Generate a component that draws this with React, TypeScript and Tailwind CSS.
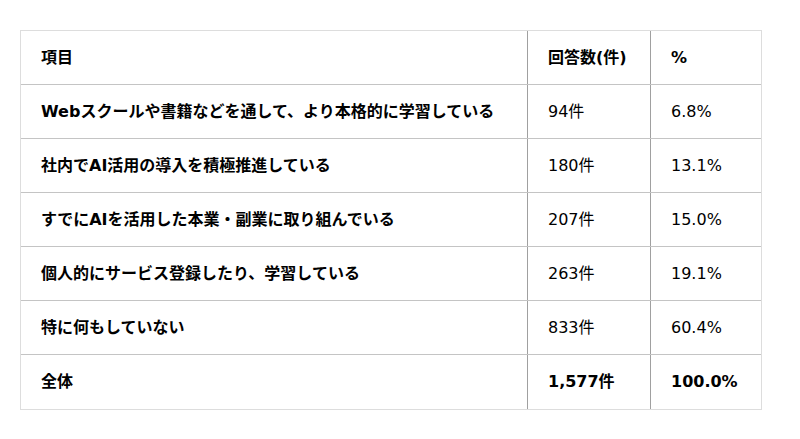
const rows = [
  { label: 'Webスクールや書籍などを通して、より本格的に学習している', count: '94件', pct: '6.8%' },
  { label: '社内でAI活用の導入を積極推進している', count: '180件', pct: '13.1%' },
  { label: 'すでにAIを活用した本業・副業に取り組んでいる', count: '207件', pct: '15.0%' },
  { label: '個人的にサービス登録したり、学習している', count: '263件', pct: '19.1%' },
  { label: '特に何もしていない', count: '833件', pct: '60.4%' },
];

function Row({ label, count, pct, bold, last }: { label: string; count: string; pct: string; bold?: boolean; last?: boolean }) {
  return (
    <div className={`grid grid-cols-[506px_123px_111px] h-[54px] ${last ? '' : 'border-b border-[#c4c4c4]'}`}>
      <div className="flex items-center pl-5 font-bold">{label}</div>
      <div className={`flex items-center pl-5 border-l border-[#a0a0a0] ${bold ? 'font-bold' : ''}`}>{count}</div>
      <div className={`flex items-center pl-5 border-l border-[#a0a0a0] ${bold ? 'font-bold' : ''}`}>{pct}</div>
    </div>
  );
}

export default function App() {
  return (
    <div
      className="w-[800px] h-[439px] bg-white pt-[30px] pl-5 text-[16px] text-black"
      style={{ fontFamily: '"DejaVu Sans", "Noto Sans CJK JP", sans-serif' }}
    >
      <div className="w-[742px] border border-[#dddddd]">
        <Row label="項目" count="回答数(件)" pct="%" bold />
        {rows.map((r) => (
          <Row key={r.label} {...r} />
        ))}
        <Row label="全体" count="1,577件" pct="100.0%" bold last />
      </div>
    </div>
  );
}
